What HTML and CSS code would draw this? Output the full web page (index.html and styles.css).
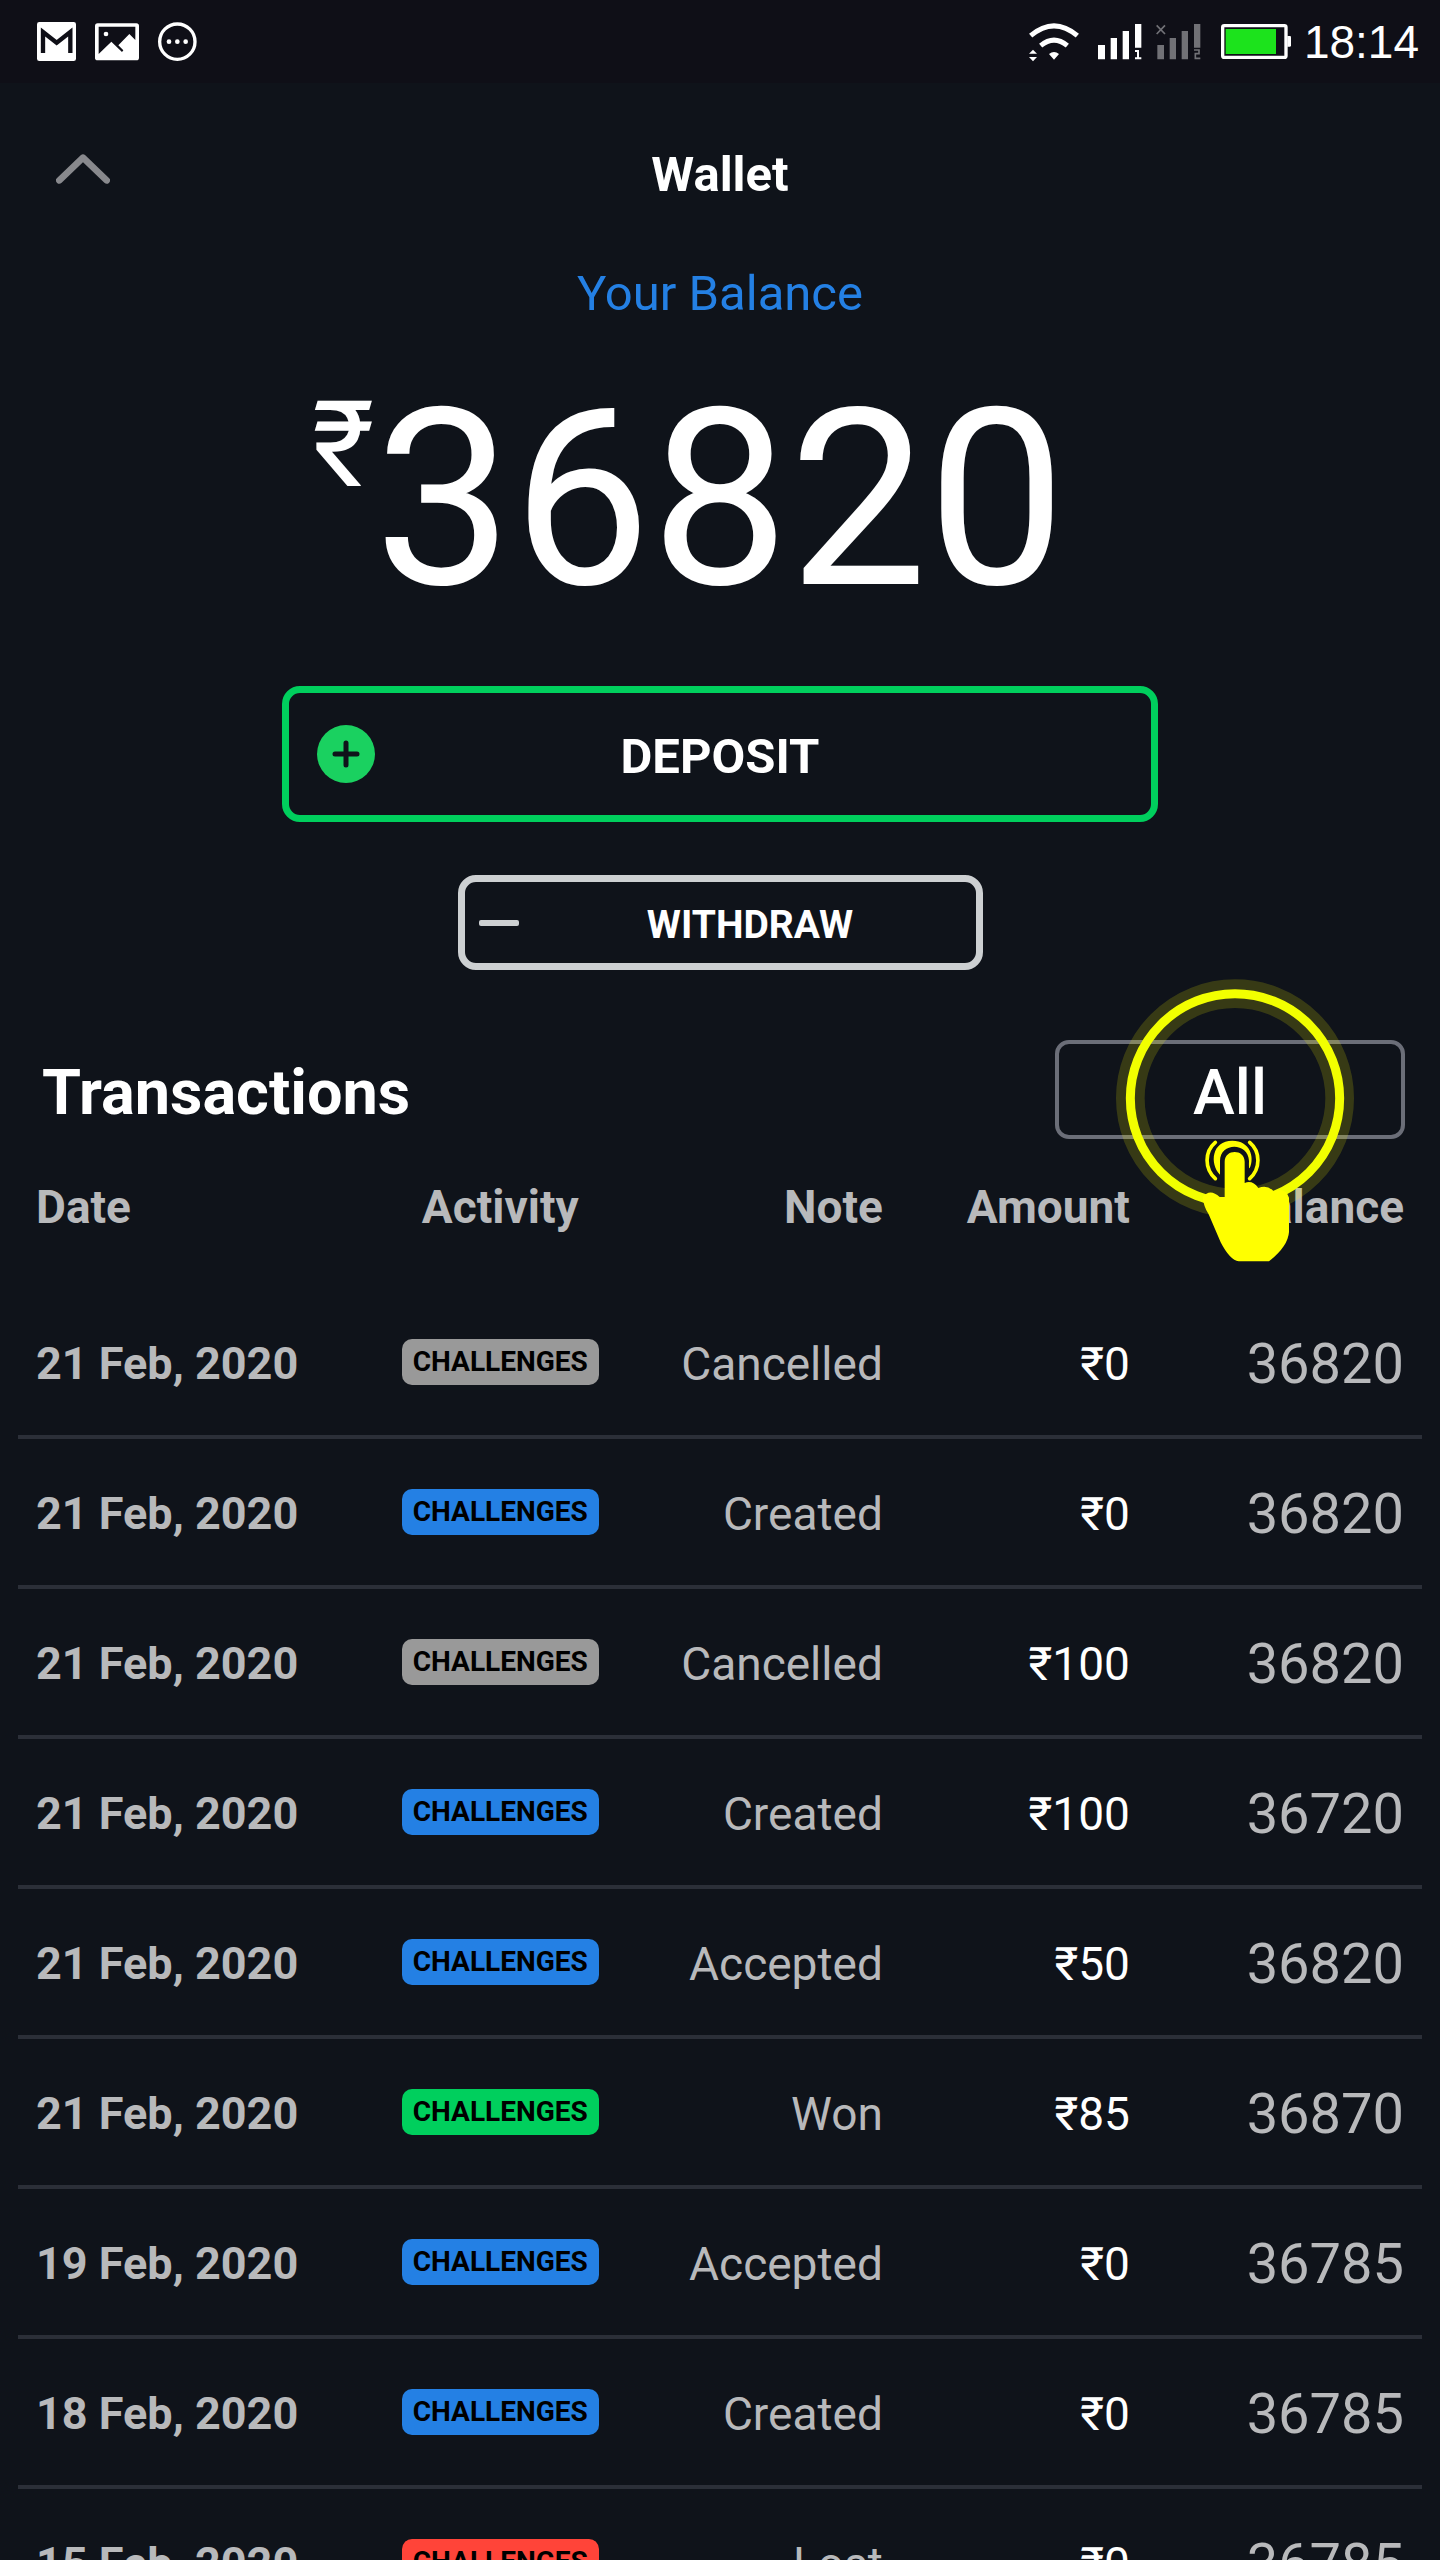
FILE: index.html
```html
<!DOCTYPE html>
<html lang="en">
<head>
    <meta charset="UTF-8">
    <meta name="viewport" content="width=device-width, initial-scale=1.0">
    <title>Wallet</title>
    <link rel="stylesheet" href="styles.css">
</head>
<body>

    <div class="status-bar">
        <div class="status-left">
            <svg width="39" height="40" viewBox="111 66 117 120">
                <rect x="111" y="66" width="117" height="117" rx="7" fill="#fff"/>
                <path d="M129 159V96L170 128L211 96V159" fill="none" stroke="#0f0f17" stroke-width="13"/>
            </svg>
            <svg width="44" height="40" viewBox="284 66 132 120">
                <rect x="284" y="70" width="132" height="111" rx="8" fill="#fff"/>
                <path d="M295 80H405V120L387 102L354 136L369 151L365 156L333 125L295 162Z" fill="#0f0f17"/>
                <circle cx="317" cy="102" r="7" fill="#fff"/>
            </svg>
            <svg width="39" height="40" viewBox="471 66 117 120">
                <circle cx="529" cy="125" r="53" fill="none" stroke="#fff" stroke-width="10"/>
                <circle cx="504" cy="125" r="7" fill="#fff"/>
                <circle cx="529" cy="125" r="7" fill="#fff"/>
                <circle cx="554" cy="125" r="7" fill="#fff"/>
            </svg>
        </div>
        <div class="status-right">
            <svg width="60" height="40" viewBox="87 66 180 120">
                <path d="M92 107Q162 48 232 107M122 137Q162 104 202 137" fill="none" stroke="#fff" stroke-width="15"/>
                <path d="M147 162Q162 150 177 162L162 179ZM87 161L99 149L111 161ZM87 171H111L99 184Z" fill="#fff"/>
            </svg>
            <svg width="49" height="40" viewBox="294 66 147 120">
                <path d="M294 135h21v43h-21zM332 114h19v64h-19zM368 93h19v85h-19zM405 72h19v71h-19z" fill="#fff"/>
                <path d="M405 153h9v21M405 175h19" fill="none" stroke="#fff" stroke-width="6"/>
            </svg>
            <svg width="56" height="40" viewBox="468 66 168 120">
                <path d="M472 135h20v43h-20zM509 114h19v64h-19zM545 93h19v85h-19zM582 72h19v71h-19z" fill="#717176"/>
                <path d="M470 76l25 26M495 76l-25 26M582 150h15v11h-11v14h15" fill="none" stroke="#717176" stroke-width="5"/>
            </svg>
            <svg width="70" height="40" viewBox="663 66 210 120">
                <path d="M862 108h8q3 0 3 4v24q0 4-3 4h-8z" fill="#fff"/>
                <rect x="668" y="77" width="190" height="95" rx="5" fill="none" stroke="#fff" stroke-width="10"/>
                <rect x="677" y="87" width="151" height="75" fill="#1ce31c"/>
            </svg>
            <span class="time">18:14</span>
        </div>
    </div>

    <div class="header">
        <button class="back" aria-label="Close">
            <svg width="54" height="30" viewBox="168 462 162 90">
                <path d="M178 541L249 473L320 541" fill="none" stroke="#88898d" stroke-width="20" stroke-linecap="round" stroke-linejoin="round"/>
            </svg>
        </button>
        <h1>Wallet</h1>
    </div>

    <div class="balance">
        <p class="balance-label">Your Balance</p>
        <div class="balance-value">
            <span class="currency">₹</span>
            <span class="number">36820</span>
        </div>
        <button class="deposit">
            <svg width="58" height="58" viewBox="0 0 58 58">
                <circle cx="29" cy="29" r="29" fill="#1ad160"/>
                <path d="M29 18V40M18 29H40" stroke="#0f131a" stroke-width="5" stroke-linecap="round"/>
            </svg>
            <span>DEPOSIT</span>
        </button>
        <button class="withdraw">
            <svg width="40" height="6" viewBox="0 0 40 6">
                <rect width="40" height="6" rx="2" fill="#cdd0d2"/>
            </svg>
            <span>WITHDRAW</span>
        </button>
    </div>

    <div class="transactions-head">
        <h2>Transactions</h2>
        <div class="filter">
            <button class="filter-button">All</button>
            <!-- tap hint over the filter -->
            <svg class="tap-hint" width="238" height="284" viewBox="288 56 714 852">
                <circle cx="645" cy="414" r="314" fill="none" stroke="#ffff00" stroke-opacity="0.17" stroke-width="86"/>
                <circle cx="645" cy="414" r="314" fill="none" stroke="#f2ff00" stroke-width="27"/>
                <path d="M614 710V604C614 565 674 565 674 604V668Q697 658 715 683Q742 672 761 693Q797 680 807 712V815Q804 858 747 903H656Q630 900 602 846L566 762Q551 740 548 710Q570 683 599 710Z" fill="#ffff00"/>
                <path d="M600 643C568 610 575 541 637 541C690 541 705 590 689 624Q686 625 687 602C685 545 600 545 600 602Z" fill="#ffff00"/>
                <path d="M586 546C553 574 553 625 586 655M689 546C722 574 722 625 689 655" fill="none" stroke="#ffff00" stroke-width="11" stroke-linecap="round"/>
            </svg>
        </div>
    </div>

    <table class="transactions">
        <thead>
            <tr>
                <th class="date">Date</th>
                <th class="activity">Activity</th>
                <th class="note">Note</th>
                <th class="amount">Amount</th>
                <th class="total">Balance</th>
            </tr>
        </thead>
        <tbody>
            <tr>
                <td class="date">21 Feb, 2020</td>
                <td class="activity"><span class="badge gray">CHALLENGES</span></td>
                <td class="note">Cancelled</td>
                <td class="amount">₹0</td>
                <td class="total">36820</td>
            </tr>
            <tr>
                <td class="date">21 Feb, 2020</td>
                <td class="activity"><span class="badge blue">CHALLENGES</span></td>
                <td class="note">Created</td>
                <td class="amount">₹0</td>
                <td class="total">36820</td>
            </tr>
            <tr>
                <td class="date">21 Feb, 2020</td>
                <td class="activity"><span class="badge gray">CHALLENGES</span></td>
                <td class="note">Cancelled</td>
                <td class="amount">₹100</td>
                <td class="total">36820</td>
            </tr>
            <tr>
                <td class="date">21 Feb, 2020</td>
                <td class="activity"><span class="badge blue">CHALLENGES</span></td>
                <td class="note">Created</td>
                <td class="amount">₹100</td>
                <td class="total">36720</td>
            </tr>
            <tr>
                <td class="date">21 Feb, 2020</td>
                <td class="activity"><span class="badge blue">CHALLENGES</span></td>
                <td class="note">Accepted</td>
                <td class="amount">₹50</td>
                <td class="total">36820</td>
            </tr>
            <tr>
                <td class="date">21 Feb, 2020</td>
                <td class="activity"><span class="badge green">CHALLENGES</span></td>
                <td class="note">Won</td>
                <td class="amount">₹85</td>
                <td class="total">36870</td>
            </tr>
            <tr>
                <td class="date">19 Feb, 2020</td>
                <td class="activity"><span class="badge blue">CHALLENGES</span></td>
                <td class="note">Accepted</td>
                <td class="amount">₹0</td>
                <td class="total">36785</td>
            </tr>
            <tr>
                <td class="date">18 Feb, 2020</td>
                <td class="activity"><span class="badge blue">CHALLENGES</span></td>
                <td class="note">Created</td>
                <td class="amount">₹0</td>
                <td class="total">36785</td>
            </tr>
            <tr>
                <td class="date">15 Feb, 2020</td>
                <td class="activity"><span class="badge red">CHALLENGES</span></td>
                <td class="note">Lost</td>
                <td class="amount">₹0</td>
                <td class="total">36785</td>
            </tr>
        </tbody>
    </table>

</body>
</html>
```
FILE: styles.css
```css
* {
    box-sizing: border-box;
}
body {
    font-family: Roboto, "Liberation Sans", sans-serif;
    margin: 0;
    height: 100vh;
    overflow: hidden;
    background-color: #0f131a;
    color: white;
}
h1, h2, p {
    margin: 0;
}
svg {
    display: block;
    flex-shrink: 0;
}
button {
    font-family: inherit;
    color: white;
    background: none;
    cursor: pointer;
}

/* Status bar */
.status-bar {
    display: flex;
    justify-content: space-between;
    align-items: center;
    height: 83px;
    padding: 0 21px 0 37px;
    background-color: #0f0f17;
}
.status-left {
    display: flex;
    gap: 19px;
}
.status-right {
    display: flex;
    align-items: center;
    gap: 9px;
}
.time {
    padding-left: 4px;
    font-family: "Liberation Sans", Arial, sans-serif;
    font-size: 46px;
    line-height: 50px;
}

/* Header */
.header {
    display: grid;
    grid-template-columns: 1fr auto 1fr;
    align-items: center;
    padding: 64px 56px 0;
}
.header h1 {
    font-size: 49px;
    line-height: 56px;
}
.back {
    justify-self: start;
    padding: 0 0 12px;
    border: none;
}

/* Balance */
.balance {
    display: flex;
    flex-direction: column;
    align-items: center;
    padding-top: 61px;
}
.balance-label {
    font-size: 49px;
    line-height: 60px;
    color: #2480e4;
}
.balance-value {
    display: grid;
    grid-template-columns: 1fr auto 1fr;
    width: 100%;
    margin: 31px 0 41px;
}
.currency {
    justify-self: end;
    font-size: 120px;
    line-height: 180px;
}
.number {
    font-size: 246px;
    line-height: 290px;
}
.deposit, .withdraw {
    display: grid;
    align-items: center;
    border-radius: 18px;
    font-weight: bold;
}
.deposit span, .withdraw span {
    padding-top: 4px;
}
.deposit {
    grid-template-columns: 58px 1fr 58px;
    width: 876px;
    height: 136px;
    padding: 0 28px;
    border: 7px solid #00cf5d;
    font-size: 49px;
}
.withdraw {
    grid-template-columns: 40px 1fr;
    width: 525px;
    height: 95px;
    margin-top: 53px;
    padding: 0 14px;
    border: 7px solid #cdd0d2;
    font-size: 39px;
}
.withdraw span {
    padding-left: 20px;
}

/* Transactions */
.transactions-head {
    display: flex;
    justify-content: space-between;
    align-items: center;
    padding: 70px 35px 0 42px;
}
.transactions-head h2 {
    padding-top: 6px;
    font-size: 63px;
    line-height: 76px;
}
.filter {
    position: relative;
}
.filter-button {
    display: block;
    width: 350px;
    height: 99px;
    padding: 6px 0 0;
    border: 4px solid #6b6e78;
    border-radius: 14px;
    font-size: 63px;
    font-weight: 500;
}
.tap-hint {
    position: absolute;
    left: 61px;
    top: -61px;
    pointer-events: none;
}
.transactions {
    width: calc(100% - 36px);
    margin: 0 18px;
    border-collapse: separate;
    border-spacing: 0;
    table-layout: fixed;
    font-size: 46px;
    line-height: 54px;
    color: #b8b9bb;
}
.transactions th {
    height: 150px;
    padding: 41px 0 0;
    vertical-align: top;
}
.transactions td {
    height: 150px;
    padding: 4px 0 0;
    border-bottom: 4px solid #2b2f38;
    white-space: nowrap;
}
.transactions .date {
    width: 26%;
    padding-left: 18px;
    text-align: left;
    font-weight: bold;
}
.transactions td.date {
    font-size: 45px;
}
.transactions .activity {
    width: 16.7%;
    text-align: center;
}
.transactions td.activity {
    padding: 0;
}
.transactions .note {
    width: 18.9%;
    text-align: right;
}
.transactions .amount {
    width: 17.6%;
    text-align: right;
}
.transactions td.amount {
    color: white;
}
.transactions .total {
    padding-right: 18px;
    text-align: right;
}
.transactions td.total {
    font-size: 56px;
}
.badge {
    display: block;
    width: fit-content;
    margin: 0 auto;
    padding: 0 11px;
    border-radius: 10px;
    font-size: 28px;
    font-weight: bold;
    line-height: 46px;
    color: black;
}
.gray {
    background-color: #999999;
}
.blue {
    background-color: #2480e4;
}
.green {
    background-color: #00cf5d;
}
.red {
    background-color: #ff4439;
}
```
